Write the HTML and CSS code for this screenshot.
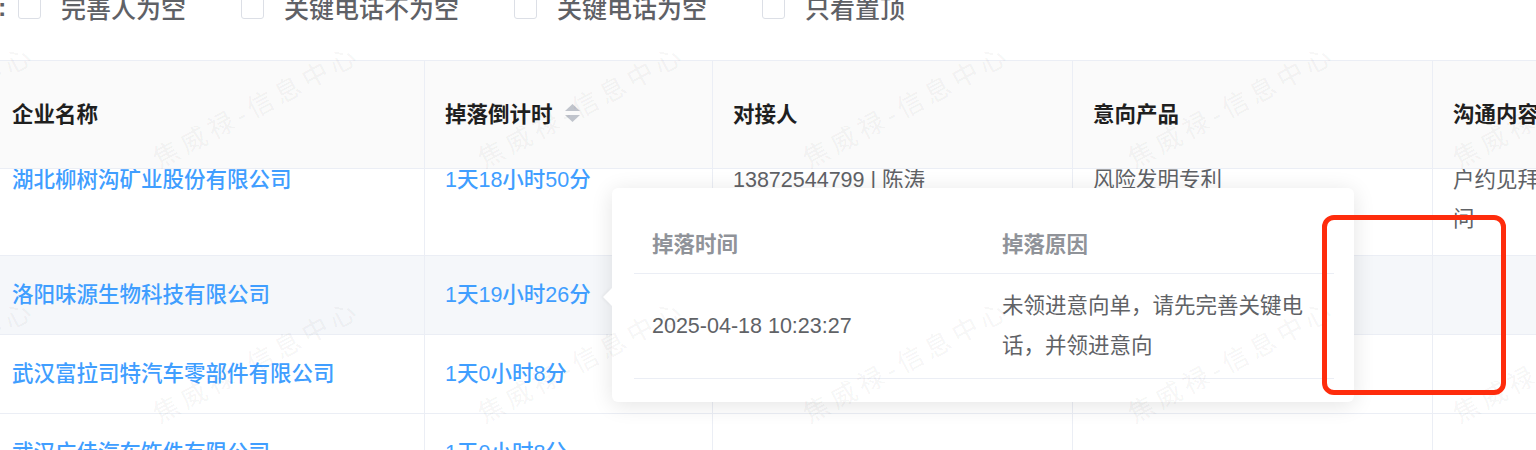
FILE: index.html
```html
<!DOCTYPE html>
<html lang="zh-CN">
<head>
<meta charset="utf-8">
<title>掉落记录</title>
<link rel="stylesheet" href="styles.css">
</head>
<body>
  <div class="filters">
    <span class="colon">:</span>
    <label class="check"><span class="box"></span><span>完善人为空</span></label>
    <label class="check"><span class="box"></span><span>关键电话不为空</span></label>
    <label class="check"><span class="box"></span><span>关键电话为空</span></label>
    <label class="check"><span class="box"></span><span>只看置顶</span></label>
  </div>

  <div class="grid-wrap">
    <table class="tbl head">
      <colgroup><col class="c1"><col class="c2"><col class="c3"><col class="c4"><col class="c5"></colgroup>
      <thead>
        <tr>
          <th class="first">企业名称</th>
          <th><div class="sortable">掉落倒计时
            <svg class="sort" width="17" height="20" viewBox="0 0 17 20"><path d="M1 8 L8.5 1 L16 8 Z" fill="#c0c4cc"/><path d="M1 12 L8.5 19 L16 12 Z" fill="#c0c4cc"/></svg></div></th>
          <th>对接人</th>
          <th>意向产品</th>
          <th>沟通内容</th>
        </tr>
      </thead>
    </table>
    <div class="body-scroll">
      <table class="tbl body">
        <colgroup><col class="c1"><col class="c2"><col class="c3"><col class="c4"><col class="c5"></colgroup>
        <tbody>
          <tr>
            <td class="first link">湖北柳树沟矿业股份有限公司</td>
            <td class="link">1天18小时50分</td>
            <td>13872544799 | 陈涛</td>
            <td>风险发明专利</td>
            <td class="multi"><span class="ln">已电话沟通，客</span><span class="ln">户约见拜访顾</span><span class="ln">问</span></td>
          </tr>
          <tr class="hover">
            <td class="first link">洛阳味源生物科技有限公司</td>
            <td class="link">1天19小时26分</td>
            <td></td><td></td><td></td>
          </tr>
          <tr>
            <td class="first link">武汉富拉司特汽车零部件有限公司</td>
            <td class="link">1天0小时8分</td>
            <td></td><td></td><td></td>
          </tr>
          <tr>
            <td class="first link">武汉广佳汽车饰件有限公司</td>
            <td class="link">1天0小时8分</td>
            <td></td><td></td><td></td>
          </tr>
        </tbody>
      </table>
    </div>
  </div>

  <div class="popover">
    <table class="pop-tbl">
      <thead>
        <tr><th>掉落时间</th><th>掉落原因</th></tr>
      </thead>
      <tbody>
        <tr><td>2025-04-18 10:23:27</td><td>未领进意向单，请先完善关键电话，并领进意向</td></tr>
      </tbody>
    </table>
  </div>

  <div class="mark"></div>

  <div class="wm">
    <span>焦威禄-信息中心</span><span>焦威禄-信息中心</span><span>焦威禄-信息中心</span><span>焦威禄-信息中心</span><span>焦威禄-信息中心</span><span>焦威禄-信息中心</span>
    <span>焦威禄-信息中心</span><span>焦威禄-信息中心</span><span>焦威禄-信息中心</span><span>焦威禄-信息中心</span><span>焦威禄-信息中心</span><span>焦威禄-信息中心</span>
    <span>焦威禄-信息中心</span><span>焦威禄-信息中心</span><span>焦威禄-信息中心</span><span>焦威禄-信息中心</span><span>焦威禄-信息中心</span><span>焦威禄-信息中心</span>
  </div>
</body>
</html>
```

FILE: styles.css
```css
* { box-sizing: border-box; }

body {
  margin: 0;
  width: 1536px;
  height: 450px;
  overflow: hidden;
  position: relative;
  background: #fff;
  font-family: "Liberation Sans", "Noto Sans CJK SC", sans-serif;
  color: #606266;
}

/* filter bar */
.filters {
  display: flex;
  align-items: center;
  height: 30px;
  margin-top: -8px;
  font-size: 25px;
  color: #5f6166;
  font-weight: 500;
}
.colon { width: 20px; margin-left: -2px; font-weight: bold; }
.check { display: flex; align-items: center; gap: 20px; margin-right: 55px; }
.box {
  width: 23px;
  height: 23px;
  border: 1px solid #dcdfe6;
  border-radius: 3px;
  background: #fff;
}

/* main table */
.grid-wrap { margin-top: 38px; width: 1536px; overflow: hidden; }
.tbl {
  border-collapse: separate;
  border-spacing: 0;
  table-layout: fixed;
  width: 1733px;
  font-size: 21.5px;
}
.c1 { width: 425px; }
.c2 { width: 288px; }
.c3 { width: 360px; }
.c4 { width: 360px; }
.c5 { width: 300px; }

.head { border-top: 1px solid #ebeef5; }
.head th {
  height: 108px;
  background: #fafafa;
  border-right: 1px solid #ebeef5;
  border-bottom: 1px solid #ebeef5;
  text-align: left;
  padding: 0 20px 4px;
  font-weight: bold;
  color: #1f1f1f;
  white-space: nowrap;
}
.head th.first, .body td.first { padding-left: 12px; }
.sortable { display: flex; align-items: center; gap: 11px; }
.sort { display: block; }

.body-scroll { height: 281px; overflow: hidden; }
.body { margin-top: -63px; }
.body td {
  padding: 19.5px 20px;
  line-height: 39px;
  border-right: 1px solid #ebeef5;
  border-bottom: 1px solid #ebeef5;
  vertical-align: middle;
  white-space: nowrap;
  background: #fff;
}
.body tr.hover td { background: #f5f7fa; }
.body td.link { color: #409eff; font-weight: 500; }
.body td.multi { padding-top: 16px; padding-bottom: 16px; }
.ln { display: block; }

/* popover */
.popover {
  position: absolute;
  left: 612px;
  top: 188px;
  width: 742px;
  height: 214px;
  background: #fff;
  border-radius: 6px;
  box-shadow: 0 3px 22px rgba(0, 0, 0, 0.11);
  padding: 24px 20px 0 22px;
  z-index: 5;
}
.popover::before {
  content: "";
  position: absolute;
  left: -9px;
  top: 100px;
  border-style: solid;
  border-width: 9px 9px 9px 0;
  border-color: transparent #fff transparent transparent;
  filter: drop-shadow(-2px 0 1px rgba(0, 0, 0, 0.04));
}
.pop-tbl {
  width: 700px;
  table-layout: fixed;
  border-collapse: separate;
  border-spacing: 0;
  font-size: 21.5px;
}
.pop-tbl th {
  height: 62px;
  text-align: left;
  padding: 0 18px;
  color: #909399;
  font-weight: bold;
  border-bottom: 1px solid #ebeef5;
}
.pop-tbl td {
  padding: 12px 18px;
  line-height: 40px;
  color: #606266;
  border-bottom: 1px solid #ebeef5;
  vertical-align: middle;
}

/* red annotation */
.mark {
  position: absolute;
  left: 1322px;
  top: 215px;
  width: 184px;
  height: 180px;
  border: 5px solid #fe2c0c;
  border-radius: 12px;
  z-index: 20;
}

/* watermark */
.wm {
  position: absolute;
  left: -232px;
  top: -278px;
  display: grid;
  grid-template-columns: repeat(6, 325px);
  grid-auto-rows: 255px;
  pointer-events: none;
  z-index: 10;
}
.wm span {
  display: flex;
  align-items: center;
  justify-content: center;
  transform: rotate(-28deg);
  font-size: 26px;
  letter-spacing: 5px;
  color: rgba(0, 0, 0, 0.055);
  white-space: nowrap;
}
```
